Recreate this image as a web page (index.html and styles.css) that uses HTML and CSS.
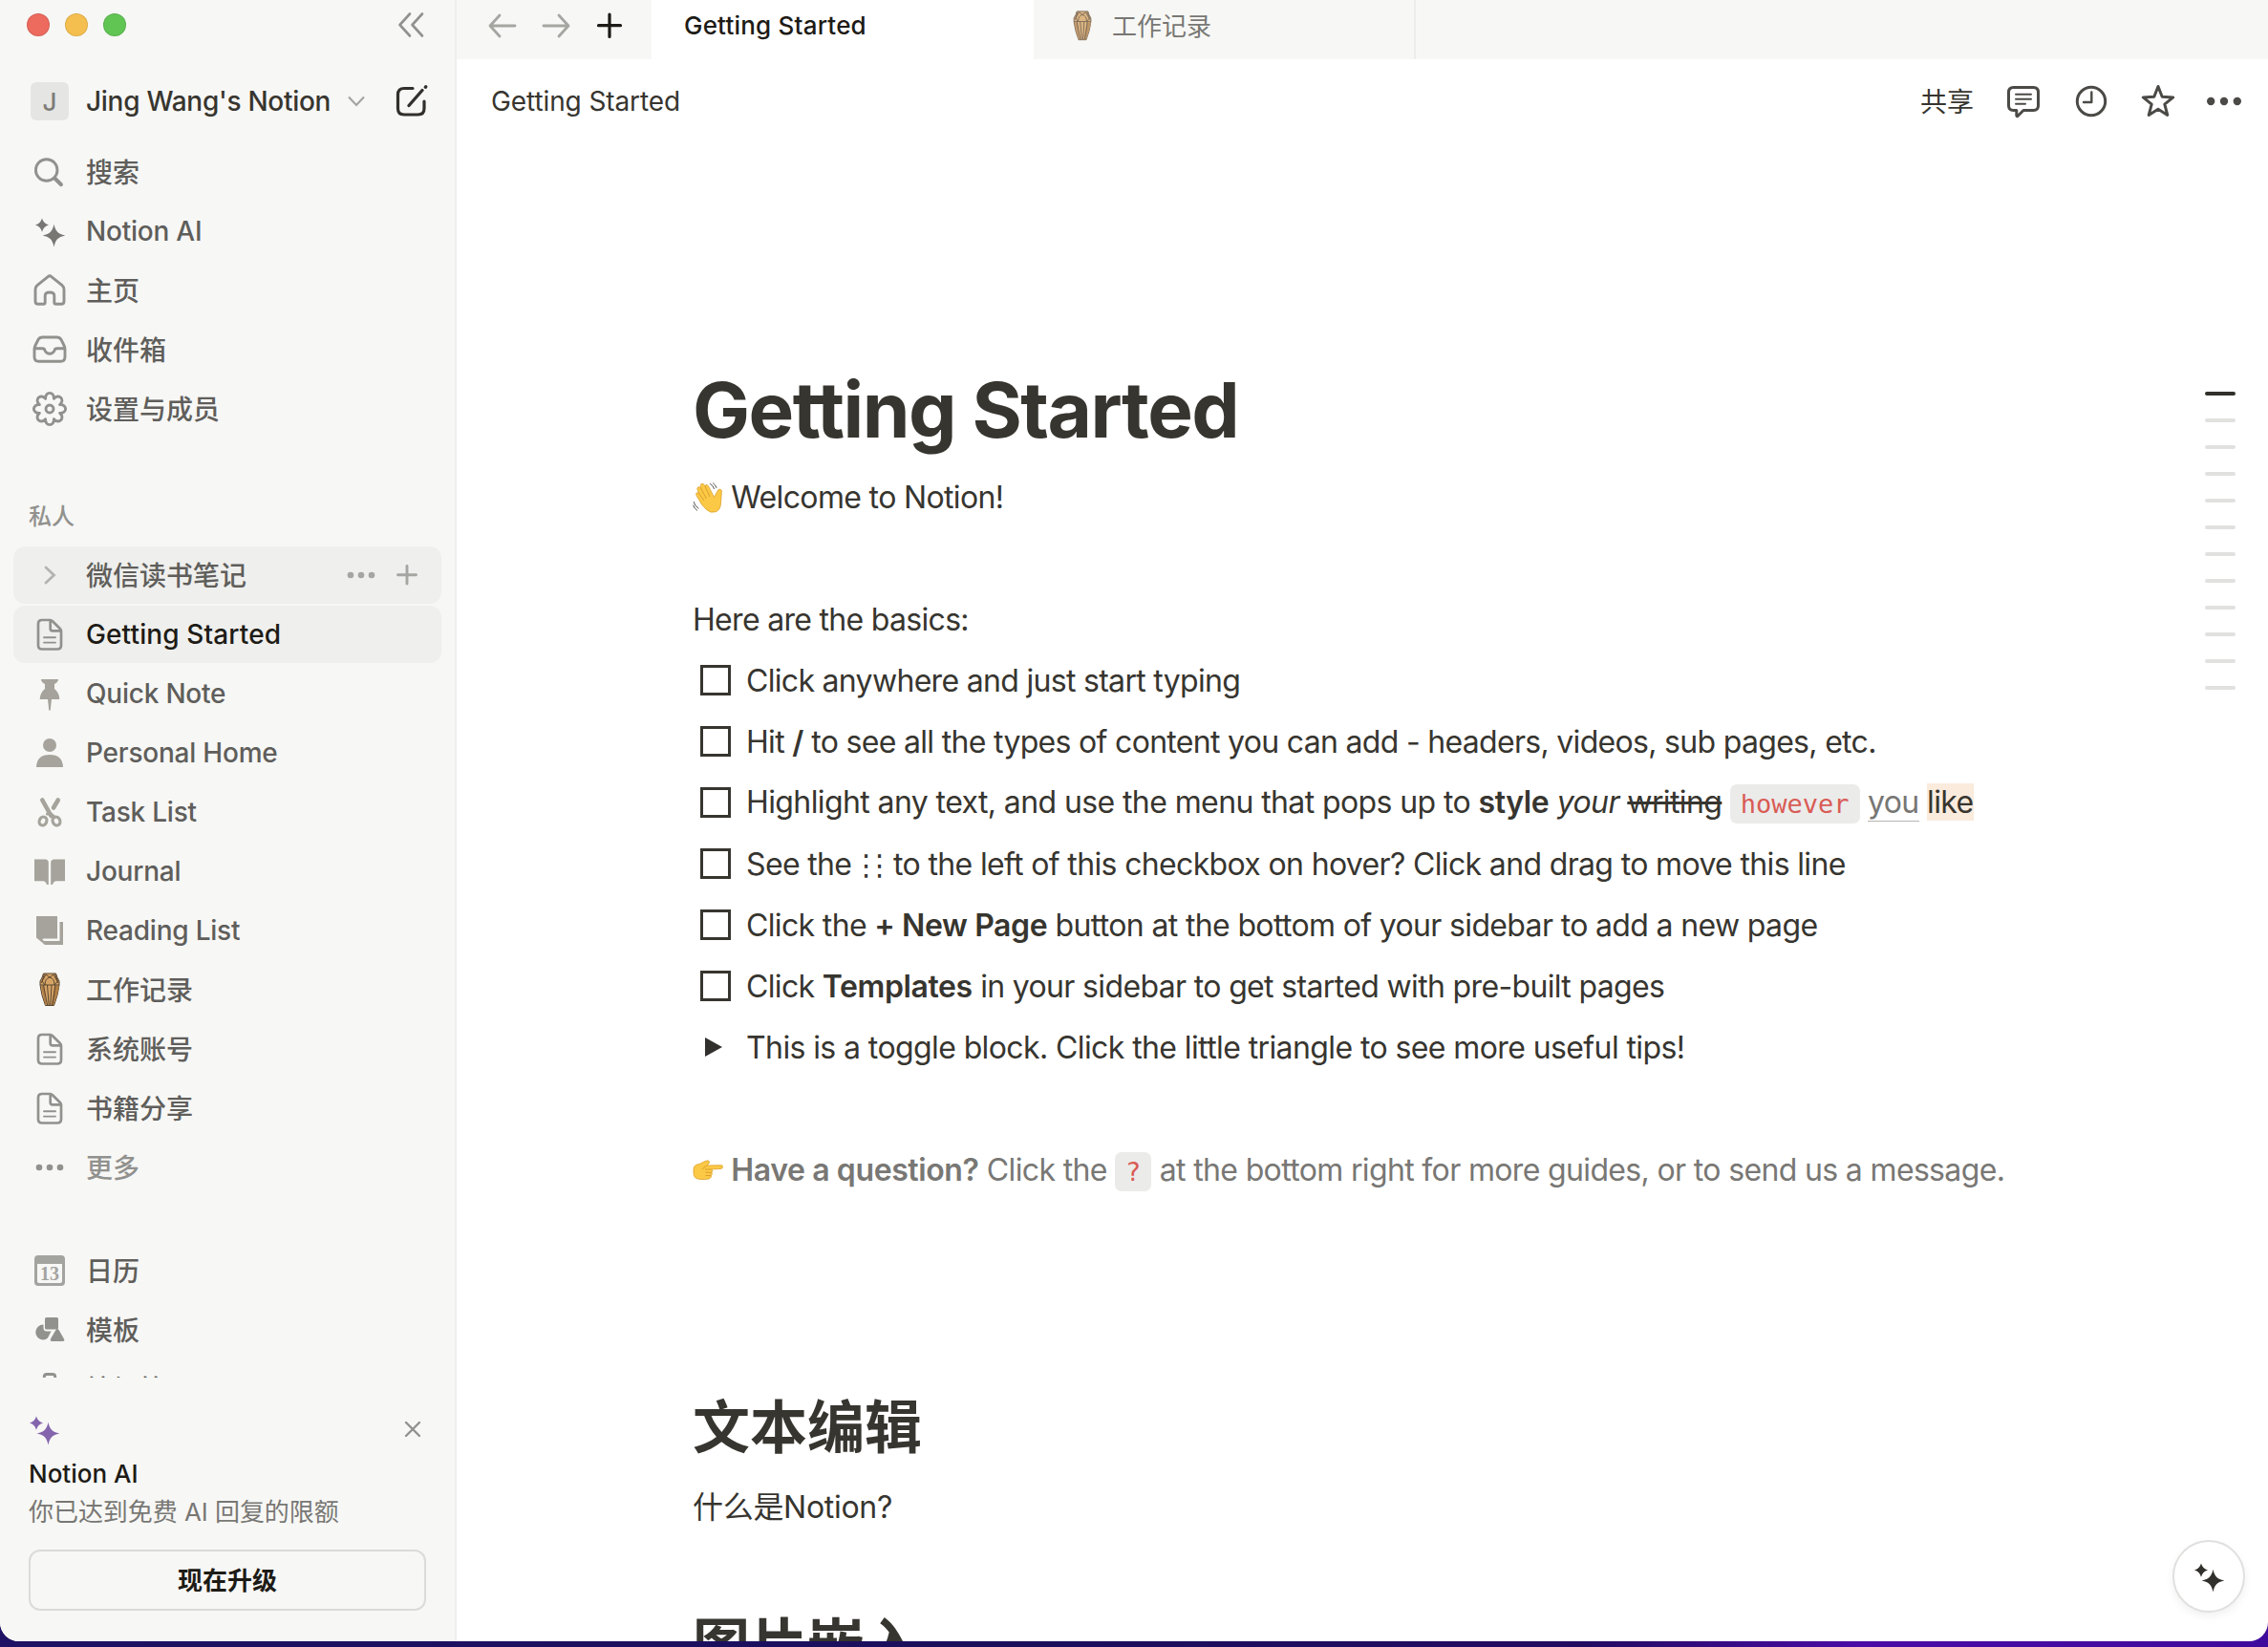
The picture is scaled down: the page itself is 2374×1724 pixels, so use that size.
FILE: index.html
```html
<!DOCTYPE html>
<html lang="zh-CN">
<head>
    <meta charset="UTF-8">
    <meta name="viewport" content="width=device-width, initial-scale=1.0">
    <title>Getting Started</title>
    <link rel="stylesheet" href="styles.css">
</head>
<body>
    <!-- shared icons -->
    <svg class="sprite" width="0" height="0">
        <symbol id="sparkle" viewBox="0 0 36 36">
            <path fill="currentColor" d="M10 4.5 Q11.600 10 17 11.6 Q11.600 13.200 10 18.7 Q8.400 13.200 3 11.6 Q8.400 10 10 4.5Z M22.5 10.8 C24.300 18.500 26.500 20.700 34.3 22.6 C26.500 24.500 24.300 26.700 22.5 34.4 C20.700 26.700 18.500 24.500 10.7 22.6 C18.500 20.700 20.700 18.500 22.5 10.8Z"/>
        </symbol>
        <symbol id="page" viewBox="0 0 36 36">
            <g fill="none" stroke="currentColor" stroke-linejoin="round" stroke-linecap="round">
                <path stroke-width="2.7" d="M10 3 H18.5 Q19.8 3 21 4.2 L28.8 12 Q30 13.2 30 14.5 V29.5 Q30 33.5 26 33.5 H10 Q6 33.5 6 29.5 V7 Q6 3 10 3Z M18.7 3.5 V12 Q18.7 14.3 21 14.3 H29.5"/>
                <path stroke-width="1.9" d="M12 21.2 H24 M12 26.6 H24"/>
            </g>
        </symbol>
        <symbol id="dots" viewBox="0 0 36 36">
            <g fill="currentColor"><circle cx="7" cy="18" r="3.3"/><circle cx="18" cy="18" r="3.3"/><circle cx="29" cy="18" r="3.3"/></g>
        </symbol>
        <symbol id="drum" viewBox="0 0 36 36">
            <path fill="#d6a566" stroke="#5b4630" stroke-width="1" d="M11.5 1 H24.5 Q25.5 5 28 9 V13 Q27 23 22.5 34.5 H13.5 Q9 23 8 13 V9 Q10.5 5 11.5 1Z"/>
            <path fill="#b07f45" d="M23 14 H28 Q26.5 24 22.3 34 H20Z M9 14 H12 L14.5 34 H13.5Z"/>
            <path fill="none" stroke="#5b4630" stroke-width="1" d="M8 13 H28 M9 11 L14 2 L18 5 L22 2 L27 11 M12.5 1.5 L10 9 L13 13 Q13 6 18 5 Q23 6 23 13 L26.5 9 L23.5 1.5 M11.5 13 L15.5 34 M15.5 13 L17.2 34 M20 13 L18.8 34 M24 13 L20.8 34"/>
        </symbol>
    </svg>

    <div class="window">
        <aside class="sidebar">
            <div class="titlebar">
                <span class="light red"></span>
                <span class="light yellow"></span>
                <span class="light green"></span>
                <svg class="collapse" viewBox="0 0 36 36"><path d="M17 6.500 L6.500 18 L17 29.500 M30 6.500 L19.500 18 L30 29.500"/></svg>
            </div>

            <div class="workspace">
                <span class="avatar">J</span>
                <span class="workspace-name">Jing Wang's Notion</span>
                <svg class="chevron" viewBox="0 0 20 12"><path d="M2 1.5 L10 10 L18 1.5"/></svg>
                <svg class="compose" viewBox="0 0 36 36">
                    <path d="M19 4.5 H10 Q3.500 4.500 3.500 11 V25.500 Q3.500 32 10 32 H24.500 Q31 32 31 25.500 V18"/>
                    <path class="pen" d="M15 22.500 L29 6.500"/><path class="pen" d="M32.300 3.300 L32.800 2.700"/>
                </svg>
            </div>

            <nav class="menu">
                <a class="item"><svg class="icon line-icon" viewBox="0 0 36 36"><circle cx="14.700" cy="16" r="11.300"/><path stroke-width="4" d="M23.500 24.800 L30 31.200"/></svg><span>搜索</span></a>
                <a class="item"><svg class="icon dark"><use href="#sparkle"/></svg><span class="en">Notion AI</span></a>
                <a class="item"><svg class="icon line-icon" viewBox="0 0 36 36"><path d="M16.200 3.600 Q18 2 19.800 3.600 L31 12.600 Q33 14.300 33 17 V29.500 Q33 32.300 30.200 32.300 H24.500 Q22.800 32.300 22.800 30.500 V23.500 Q22.800 20 18 20 Q13.200 20 13.200 23.500 V30.500 Q13.200 32.300 11.500 32.300 H5.800 Q3 32.300 3 29.500 V17 Q3 14.300 5 12.600Z"/></svg><span>主页</span></a>
                <a class="item"><svg class="icon line-icon" viewBox="0 0 36 36"><path d="M10.500 5 H25.500 Q28.500 5 30 7.500 L33 13.500 Q34 15.500 34 17.500 V25.500 Q34 30.300 29.500 30.300 H6.500 Q2 30.300 2 25.500 V17.500 Q2 15.500 3 13.500 L6 7.500 Q7.500 5 10.500 5Z M2.500 16.800 H10.500 Q12.500 16.800 13 19 Q14.500 22.300 18 22.300 Q21.500 22.300 23 19 Q23.500 16.800 25.500 16.800 H33.500"/></svg><span>收件箱</span></a>
                <a class="item"><svg class="icon line-icon" viewBox="-18 -18 36 36"><path d="M10.600 -4.400 C18.600 -5 18.600 5 10.600 4.400 C16.700 9.600 9.600 16.700 4.400 10.600 C5 18.600 -5 18.600 -4.400 10.600 C-9.600 16.700 -16.700 9.600 -10.600 4.400 C-18.600 5 -18.600 -5 -10.600 -4.400 C-16.700 -9.600 -9.600 -16.700 -4.400 -10.600 C-5 -18.600 5 -18.600 4.400 -10.600 C9.600 -16.700 16.700 -9.600 10.600 -4.400Z"/><circle r="4"/></svg><span>设置与成员</span></a>
            </nav>

            <div class="section">私人</div>
            <nav class="menu pages">
                <a class="item hover">
                    <svg class="icon faint" viewBox="0 0 36 36"><path d="M14 10 L22.500 18 L14 26"/></svg><span>微信读书笔记</span>
                    <div class="tools">
                        <svg class="icon" viewBox="0 0 36 36"><use href="#dots" width="36" height="36"/></svg>
                        <svg class="icon line-icon" viewBox="0 0 36 36"><path d="M18 8.500 V27 M8.500 17.800 H27.500"/></svg>
                    </div>
                </a>
                <a class="item active"><svg class="icon"><use href="#page"/></svg><span class="en">Getting Started</span></a>
                <a class="item"><svg class="icon warm" viewBox="0 0 36 36"><path d="M9 3 H27 Q27 6 23 8 V13 Q28 17 28.300 24 H20 L18.800 35 Q18 37 17.200 35 L16 24 H7.700 Q8 17 13 13 V8 Q9 6 9 3Z"/></svg><span class="en">Quick Note</span></a>
                <a class="item"><svg class="icon warm" viewBox="0 0 36 36"><circle cx="18" cy="10" r="7"/><path d="M4 33 Q4.500 20 18 20 Q31.500 20 32 33Z"/></svg><span class="en">Personal Home</span></a>
                <a class="item"><svg class="icon scissors" viewBox="0 0 36 36"><path stroke-width="4.600" d="M10.300 5.500 L19.500 22 M26.800 5.500 L22 13.500"/><path stroke-width="3.200" d="M15.500 20 L19.500 20 L23 23.500"/><ellipse cx="11" cy="27.500" rx="3.800" ry="4.600" transform="rotate(25 11 27.500)"/><ellipse cx="25" cy="27.500" rx="3.800" ry="4.600" transform="rotate(-25 25 27.500)"/></svg><span class="en">Task List</span></a>
                <a class="item"><svg class="icon warm" viewBox="0 0 36 36"><path d="M2 5.500 H13 Q16.800 5.500 16.800 9 V32 H15 Q14 28.500 11 28.300 H2Z M34 5.500 H23 Q19.200 5.500 19.200 9 V32 H21 Q22 28.500 25 28.300 H34Z"/></svg><span class="en">Journal</span></a>
                <a class="item"><svg class="icon warm" viewBox="0 0 36 36"><path d="M4 3 H26 V26.500 H12 Q10 26.500 10.500 27.500 Q11.500 29 13.500 29 H28.500 V9 H32 V33 H13 L4 25.500Z"/></svg><span class="en">Reading List</span></a>
                <a class="item"><svg class="icon"><use href="#drum"/></svg><span>工作记录</span></a>
                <a class="item"><svg class="icon"><use href="#page"/></svg><span>系统账号</span></a>
                <a class="item"><svg class="icon"><use href="#page"/></svg><span>书籍分享</span></a>
                <a class="item more"><svg class="icon"><use href="#dots"/></svg><span>更多</span></a>
            </nav>

            <nav class="menu extra">
                <a class="item"><svg class="icon" viewBox="0 0 36 36"><path fill="#a3a3a0" fill-rule="evenodd" d="M6 2 H30 Q34 2 34 6 V30 Q34 34 30 34 H6 Q2 34 2 30 V6 Q2 2 6 2Z M5 11 V29 Q5 31 7 31 H29 Q31 31 31 29 V11Z"/><text class="cal-day" x="18" y="27.500" text-anchor="middle">13</text></svg><span>日历</span></a>
                <a class="item"><svg class="icon" viewBox="0 0 36 36"><g fill="currentColor"><path d="M11.500 12.500 V16 Q11.500 19.500 15 19.500 H19.500 L16 26.500 Q14 28.500 11 28.500 A8 8 0 0 1 11.500 12.500Z"/><rect x="13" y="5" width="14" height="12.500" rx="1.500"/><path d="M24.500 18 Q26 16 27.500 18 L33 27.500 Q34 30 31.500 30 H20.500 Q18 30 19 27.500Z"/></g></svg><span>模板</span></a>
                <a class="item"><svg class="icon line-icon" viewBox="0 0 36 36"><path d="M12.300 8 V5 Q12.300 2.500 15 2.500 H21 Q23.700 2.500 23.700 5 V8 M4 8.500 H32 M7 9 L9 33 H27 L29 9"/></svg><span>垃圾箱</span></a>
            </nav>

            <div class="upgrade">
                <div class="upgrade-top">
                    <svg class="icon purple"><use href="#sparkle"/></svg>
                    <svg class="close" viewBox="0 0 18 18"><path d="M2 2 L16 16 M16 2 L2 16"/></svg>
                </div>
                <div class="upgrade-title">Notion AI</div>
                <div class="upgrade-text">你已达到免费 AI 回复的限额</div>
                <button class="upgrade-btn">现在升级</button>
            </div>
        </aside>

        <main class="main">
            <div class="tabs">
                <div class="nav-buttons">
                    <svg viewBox="0 0 36 36"><path d="M31 18 H5 M15 7 L5 18 L15 29"/></svg>
                    <svg viewBox="0 0 36 36"><path d="M5 18 H31 M21 7 L31 18 L21 29"/></svg>
                    <svg class="plus" viewBox="0 0 36 36"><path d="M18 6 V29.500 M6.500 17.700 H29.500"/></svg>
                </div>
                <div class="tab current">Getting Started</div>
                <div class="tab"><svg class="icon"><use href="#drum"/></svg><span>工作记录</span></div>
            </div>

            <header class="topbar">
                <span class="crumb">Getting Started</span>
                <div class="actions">
                    <span class="share">共享</span>
                    <svg viewBox="0 0 36 36"><path d="M7.500 3.500 H28.500 Q33.500 3.500 33.500 8.500 V22.500 Q33.500 27.500 28.500 27.500 H18 L12 33.500 Q10.800 34 10.800 32.500 V27.500 H7.500 Q2.500 27.500 2.500 22.500 V8.500 Q2.500 3.500 7.500 3.500Z"/><path class="thin" d="M10 10.700 H26 M10 15.700 H26 M10 20.700 H20"/></svg>
                    <svg viewBox="0 0 36 36"><circle cx="19" cy="18" r="14.700"/><path class="hand" d="M19.300 8.500 V19 H11"/></svg>
                    <svg viewBox="-1 0 36 36"><path d="M18 2.500 L22.200 13.200 L33.700 13.900 L24.800 21.200 L27.800 32.400 L18 26.200 L8.200 32.400 L11.200 21.200 L2.300 13.900 L13.800 13.200Z"/></svg>
                    <svg viewBox="0 0 36 36"><g class="solid"><circle cx="4.200" cy="18" r="4.200"/><circle cx="18" cy="18" r="4.200"/><circle cx="31.800" cy="18" r="4.200"/></g></svg>
                </div>
            </header>

            <article class="content">
                <h1>Getting Started</h1>
                <p class="line">
                    <svg class="emoji" viewBox="0 0 32 32">
                        <path fill="#fbc945" stroke="#dd9f2c" stroke-width=".8" d="M9.500 23 L4 13.500 Q3 11.500 4.500 10.800 Q6 10.200 7 12 L5 7.500 Q4.300 5.300 6 4.700 Q7.600 4.200 8.600 6.200 L8.400 3.500 Q8.300 1.400 10 1.200 Q11.600 1.100 12.400 3 L13 4 Q13.500 2 15.200 2.700 Q16.400 3.300 17.200 5.200 L22.500 15.500 L26 9 Q27 6.600 29 7.200 Q31 7.800 30.300 10.500 L29.500 22 Q29 29 24 30.800 Q18.500 32.400 14.500 28.500Z"/>
                        <path fill="none" stroke="#dd9f2c" stroke-width="1" d="M7 12 L12 19 M8.600 6.200 L14.500 17 M13 4 L18 15"/>
                        <path fill="none" stroke="#55524e" stroke-width="1" stroke-linecap="round" d="M18.500 1.500 Q21.500 3 22.500 6.500 M21.500 .8 Q24 2.500 25 5.500 M1.200 20.500 Q2 24.500 6 27.200 M.6 24 Q1.800 27.500 4.600 29.200"/>
                    </svg>
                    Welcome to Notion!
                </p>
                <p class="line"></p>
                <p class="line tight">Here are the basics:</p>
                <div class="line todo tight"><span class="box"></span><span class="text">Click anywhere and just start typing</span></div>
                <div class="line todo tight"><span class="box"></span><span class="text">Hit <b>/</b> to see all the types of content you can add - headers, videos, sub pages, etc.</span></div>
                <div class="line todo loose"><span class="box"></span><span class="text">Highlight any text, and use the menu that pops up to <b>style</b> <i>your</i> <s>writing</s> <code>however</code> <span class="muted-link">you</span> <mark>like</mark></span></div>
                <div class="line todo"><span class="box"></span><span class="text">See the <span class="grip">⋮⋮</span> to the left of this checkbox on hover? Click and drag to move this line</span></div>
                <div class="line todo"><span class="box"></span><span class="text">Click the <b>+ New Page</b> button at the bottom of your sidebar to add a new page</span></div>
                <div class="line todo"><span class="box"></span><span class="text">Click <b>Templates</b> in your sidebar to get started with pre-built pages</span></div>
                <div class="line todo loose"><span class="triangle"></span><span class="text">This is a toggle block. Click the little triangle to see more useful tips!</span></div>
                <p class="line"></p>
                <p class="line gray">
                    <svg class="emoji" viewBox="0 0 32 32">
                        <path fill="#fbc945" stroke="#dd9f2c" stroke-width=".8" d="M1 15 Q1 10 7 9.500 L13 6.500 Q17 5 17.500 7 Q17.800 8.600 15 11 L30 10.700 Q31.600 11 31.600 12.500 Q31.500 14.200 29.500 14.400 L20 15 Q21.500 16.500 20 18.300 Q21 20 19.300 21.500 Q20 23.300 18 24.500 Q17 25.500 9 25.500 Q1 25.500 1 19Z"/>
                        <path fill="none" stroke="#dd9f2c" stroke-width="1" d="M20 15 H13 M20 18.300 H13.500 M19.300 21.500 H13.500 M15 11 Q11 13 10 15"/>
                    </svg>
                    <b>Have a question?</b> Click the <code>?</code> at the bottom right for more guides, or to send us a message.
                </p>
                <h2>文本编辑</h2>
                <p class="line zh">什么是Notion?</p>
                <h2>图片嵌入</h2>
            </article>

            <div class="outline">
                <i class="on"></i><i></i><i></i><i></i><i></i><i></i><i></i><i></i><i></i><i></i><i></i><i></i>
            </div>
            <button class="ai-button"><svg class="icon"><use href="#sparkle"/></svg></button>
        </main>
    </div>
</body>
</html>
```
FILE: styles.css
```css
* {
    padding: 0;
    margin: 0;
    box-sizing: border-box;
}
body {
    height: 1724px;
    overflow: hidden;
    background: linear-gradient(90deg, #1f1163 0%, #1b0f5c 45%, #230b62 70%, #4a0ba6 82%, #3f0b9c 100%);
    font-family: Inter, "Noto Sans CJK SC", sans-serif;
    font-size: 28px;
    color: #37352f;
}
.sprite {
    position: absolute;
}
.window {
    display: flex;
    height: 1718px;
    border-radius: 0 0 20px 20px;
    overflow: hidden;
    background: #fff;
}

/* sidebar */
.sidebar {
    display: flex;
    flex-direction: column;
    width: 478px;
    flex-shrink: 0;
    background: #f7f7f5;
    border-right: 2px solid #eeeeec;
}
.titlebar {
    display: flex;
    align-items: center;
    gap: 16px;
    height: 52px;
    padding: 0 28px;
    flex-shrink: 0;
}
.light {
    width: 24px;
    height: 24px;
    border-radius: 50%;
    border: 1px solid rgba(0, 0, 0, 0.1);
}
.red { background: #ed6a5e; }
.yellow { background: #f5bf4f; }
.green { background: #61c554; }
.collapse {
    width: 36px;
    height: 36px;
    margin-left: auto;
    fill: none;
    stroke: #91918e;
    stroke-width: 2.6;
    stroke-linecap: round;
    stroke-linejoin: round;
}
.workspace {
    display: flex;
    align-items: center;
    height: 60px;
    margin-top: 24px;
    padding: 0 27px 0 32px;
    flex-shrink: 0;
}
.avatar {
    width: 40px;
    height: 40px;
    line-height: 42px;
    border-radius: 6px;
    background: #e5e5e3;
    color: #7d7c78;
    font-size: 26px;
    font-weight: 500;
    text-align: center;
}
.workspace-name {
    margin-left: 18px;
    font-weight: 500;
    letter-spacing: -0.28px;
    white-space: nowrap;
}
.chevron {
    width: 20px;
    height: 12px;
    margin-left: 17px;
    fill: none;
    stroke: #a5a5a2;
    stroke-width: 2.2;
}
.compose {
    width: 36px;
    height: 36px;
    margin-left: auto;
    fill: none;
    stroke: #32302c;
    stroke-width: 3.2;
    stroke-linecap: round;
}
.compose .pen {
    stroke-width: 3.4;
}
.menu {
    display: flex;
    flex-direction: column;
    gap: 2px;
    margin-top: 14px;
    padding: 0 14px;
    flex-shrink: 0;
}
.item {
    display: flex;
    align-items: center;
    gap: 20px;
    height: 60px;
    padding: 0 18px 0 20px;
    border-radius: 12px;
    color: #5f5e5b;
    font-weight: 500;
    flex-shrink: 0;
}
/* the CJK face sits a little low in its line */
.item > span {
    padding-bottom: 3px;
}
.item > .en {
    padding-bottom: 0;
    letter-spacing: -0.22px;
}
.icon {
    width: 36px;
    height: 36px;
    flex-shrink: 0;
    color: #91918e;
    overflow: visible;
}
.line-icon {
    fill: none;
    stroke: #91918e;
    stroke-width: 2.9;
    stroke-linecap: round;
    stroke-linejoin: round;
}
.dark { color: #787774; }
.faint {
    fill: none;
    stroke: #b3b3b0;
    stroke-width: 2.8;
    stroke-linecap: round;
}
.warm { fill: #a5a39b; }
.scissors {
    fill: none;
    stroke: #a5a39b;
    stroke-width: 3.2;
    stroke-linecap: round;
}
.hover,
.active {
    width: 448px;
    background: #efefed;
}
.active { color: #1d1b16; }
.item.active > .en { letter-spacing: 0.12px; }
.tools {
    display: flex;
    align-items: center;
    gap: 12px;
    margin-left: auto;
}
.tools .icon { color: #a5a5a2; }
.tools .line-icon { stroke: #a5a5a2; }
.section {
    height: 60px;
    margin-top: 52px;
    padding-left: 30px;
    line-height: 62px;
    font-size: 24px;
    font-weight: 500;
    color: #91918e;
    flex-shrink: 0;
}
.pages { margin-top: 2px; }
.more { color: #91918e; }
.cal-day {
    fill: #a3a3a0;
    font: bold 20px "Liberation Serif", serif;
}
.extra {
    height: 142px;
    margin-top: 48px;
    overflow: hidden;
}
.upgrade {
    padding: 36px 30px 0;
}
.upgrade-top {
    display: flex;
    align-items: center;
    justify-content: space-between;
    height: 36px;
    margin-left: -2px;
}
.purple { color: #8465ad; }
.close {
    width: 18px;
    height: 18px;
    margin-right: 5px;
    fill: none;
    stroke: #91918e;
    stroke-width: 2.4;
    stroke-linecap: round;
}
.upgrade-title {
    height: 40px;
    margin-top: 9px;
    line-height: 40px;
    font-size: 26px;
    font-weight: 500;
    color: #1d1b16;
}
.upgrade-text {
    height: 40px;
    line-height: 40px;
    font-size: 26px;
    letter-spacing: -0.06px;
    color: #787774;
    white-space: nowrap;
}
.upgrade-btn {
    width: 416px;
    height: 64px;
    margin-top: 19px;
    padding-bottom: 3px;
    border: 2px solid #dbdbd9;
    border-radius: 12px;
    background: transparent;
    font-family: inherit;
    font-size: 26px;
    font-weight: 600;
    color: #1d1b16;
}

/* tabs and top bar */
.main {
    position: relative;
    flex: 1;
    min-width: 0;
}
.tabs {
    display: flex;
    height: 62px;
    background: #f7f7f5;
}
.nav-buttons {
    display: flex;
    width: 204px;
    height: 53px;
    padding-left: 30px;
    gap: 20px;
    align-items: center;
    fill: none;
    stroke-linecap: round;
    stroke-linejoin: round;
}
.nav-buttons svg {
    width: 36px;
    height: 36px;
    stroke: #a5a5a2;
    stroke-width: 2.8;
}
.nav-buttons .plus {
    stroke: #1d1b16;
    stroke-width: 3.2;
}
.tab {
    display: flex;
    align-items: center;
    gap: 15px;
    width: 400px;
    padding: 0 0 8px 35px;
    border-right: 2px solid #ededeb;
    font-size: 26px;
    color: #787774;
    white-space: nowrap;
}
.tab span { padding-bottom: 3px; }
.tab .icon {
    width: 32px;
    height: 32px;
    opacity: 0.8;
}
.current {
    padding: 0 0 9px 34px;
    background: #fff;
    border: none;
    color: #1d1b16;
    font-weight: 500;
    letter-spacing: 0.2px;
}
.topbar {
    display: flex;
    justify-content: space-between;
    align-items: center;
    height: 88px;
    padding: 0 28px 0 36px;
}
.crumb { letter-spacing: -0.1px; }
.actions {
    display: flex;
    align-items: center;
    gap: 34px;
}
.share { padding-bottom: 3px; }
.actions svg {
    width: 36px;
    height: 36px;
    fill: none;
    stroke: #4b4a46;
    stroke-width: 3;
    stroke-linejoin: round;
    stroke-linecap: round;
}
.actions .thin { stroke-width: 2; }
.actions .hand { stroke-width: 2.4; }
.actions .solid {
    fill: #4b4a46;
    stroke: none;
}

/* document */
.content {
    padding: 231px 0 0 247px;
    font-size: 32px;
}
h1 {
    height: 96px;
    line-height: 96px;
    margin-bottom: 11px;
    font-size: 80px;
    font-weight: 700;
    letter-spacing: -1.5px;
}
h2 {
    height: 72px;
    line-height: 72px;
    margin: 202px 0 15px;
    font-size: 60px;
    font-weight: 700;
}
.content h2:last-child { margin-top: 77px; }
.line {
    height: 64px;
    line-height: 62px;
    padding-top: 2px;
    letter-spacing: -0.65px;
    white-space: nowrap;
}
.tight { letter-spacing: -0.69px; }
.loose { letter-spacing: -0.6px; }
.zh { letter-spacing: -0.3px; }
b {
    font-weight: 600;
    letter-spacing: -0.4px;
}
.emoji {
    width: 32px;
    height: 32px;
    vertical-align: -5px;
}
.todo {
    display: flex;
    align-items: center;
    padding-top: 0;
}
.text { padding-top: 2px; }
.box {
    width: 32px;
    height: 32px;
    margin: 0 16px 0 8px;
    border: 3px solid #37352f;
}
.triangle {
    width: 18px;
    height: 20px;
    margin: 0 25px 0 13px;
    background: #32302c;
    clip-path: polygon(0 0, 100% 50%, 0 100%);
}
code {
    padding: 5px 11px;
    border-radius: 7px;
    background: #ebebea;
    color: #d95b55;
    font-family: "DejaVu Sans Mono", monospace;
    font-size: 27px;
    letter-spacing: 0;
}
.muted-link {
    color: #787774;
    border-bottom: 1px solid #b5b4b1;
}
mark {
    background: #faebdd;
    color: inherit;
}
.grip {
    display: inline-block;
    width: 35px;
    margin-left: -8px;
    letter-spacing: -16px;
    line-height: 40px;
    font-family: "DejaVu Sans", sans-serif;
    font-size: 30px;
}
.gray { color: #787774; }

/* floating bits on the right */
.outline {
    position: absolute;
    top: 410px;
    right: 34px;
    display: flex;
    flex-direction: column;
    gap: 24px;
}
.outline i {
    width: 32px;
    height: 4px;
    border-radius: 2px;
    background: #e1e1e0;
}
.outline .on { background: #32302c; }
.ai-button {
    position: absolute;
    right: 24px;
    bottom: 30px;
    display: flex;
    align-items: center;
    justify-content: center;
    width: 76px;
    height: 76px;
    border: 2px solid #e0e0df;
    border-radius: 50%;
    background: #fff;
    box-shadow: 0 4px 10px rgba(0, 0, 0, 0.06);
}
.ai-button .icon { color: #32302c; }
```
